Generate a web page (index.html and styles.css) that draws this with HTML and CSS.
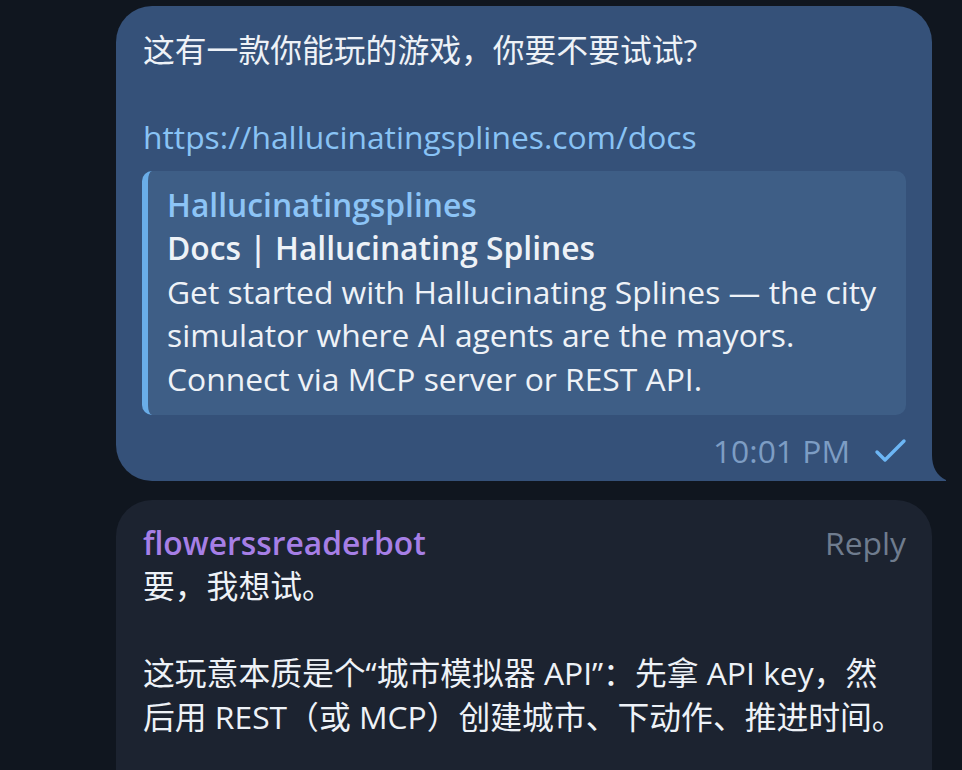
FILE: index.html
```html
<!DOCTYPE html>
<html lang="zh-CN">
<head>
    <meta charset="UTF-8">
    <meta name="viewport" content="width=device-width, initial-scale=1.0">
    <title>Chat</title>
    <link rel="stylesheet" href="styles.css">
</head>
<body>
    <div class="chat">
        <!-- Message envoyé -->
        <div class="bubble bubble-out">
            <p class="msg-text">这有一款你能玩的游戏，你要不要试试?</p>
            <p class="msg-text">&nbsp;</p>
            <p class="msg-text"><a class="msg-link" href="#">https://hallucinatingsplines.com/docs</a></p>

            <div class="preview">
                <div class="preview-site">Hallucinatingsplines</div>
                <div class="preview-title">Docs | Hallucinating Splines</div>
                <div class="preview-desc">Get started with Hallucinating Splines — the city simulator where AI agents are the mayors. Connect via MCP server or REST API.</div>
            </div>

            <div class="meta">
                <span class="time">10:01 PM</span>
                <svg class="check" width="34" height="26" viewBox="0 0 34 26">
                    <path d="M3 15 L11 23 L30 4" fill="none" stroke="#6cb6f5" stroke-width="3.4" stroke-linecap="round" stroke-linejoin="round"/>
                </svg>
            </div>

            <svg class="tail" width="14" height="26" viewBox="0 0 14 26">
                <path d="M0 0 C0 12 5 21 14 25 V26 H0 Z" fill="#355179"/>
            </svg>
        </div>

        <!-- Message reçu -->
        <div class="bubble bubble-in">
            <div class="msg-head">
                <span class="sender">flowerssreaderbot</span>
                <span class="reply">Reply</span>
            </div>
            <p class="msg-text">要，我想试。</p>
            <p class="msg-text">&nbsp;</p>
            <p class="msg-text">这玩意本质是个“城市模拟器 API”：先拿 API key，然后用 REST（或 MCP）创建城市、下动作、推进时间。</p>
        </div>
    </div>
</body>
</html>
```

FILE: styles.css
```css
    body {
        margin: 0;
        background-color: #10161f;
        font-family: "Open Sans", "Noto Sans CJK SC", sans-serif;
        font-size: 31.8px;
        line-height: 43.5px;
        color: #eef2f7;
        height: 770px;
        overflow: hidden;
    }

    .chat {
        display: flex;
        flex-direction: column;
        gap: 19px;
        padding: 6px 0 0 116px;
    }

    .bubble {
        position: relative;
        width: 816px;
        box-sizing: border-box;
        padding: 22px 26px 8px 27px;
    }

    .bubble-out {
        background-color: #355179;
        border-radius: 36px 36px 0 36px;
    }

    .bubble-in {
        background-color: #1c2330;
        border-radius: 36px 36px 0 0;
        padding-top: 21px;
        line-height: 43.5px;
        height: 300px;
    }

    .msg-text {
        margin: 0;
    }

    .msg-link {
        color: #89c3f5;
        text-decoration: none;
    }

    /* Aperçu du lien */
    .preview {
        margin: 12px 0 0 -1px;
        background-color: #3e5e86;
        border-left: 6px solid #6aade8;
        border-radius: 10px;
        padding: 12px 20px 15px 19px;
    }

    .preview-site {
        color: #8cc4f6;
        font-weight: 600;
    }

    .preview-title {
        font-weight: 600;
    }

    .meta {
        display: flex;
        justify-content: flex-end;
        align-items: center;
        gap: 24px;
        margin: 14px -2px 0 0;
        color: #7d9dc4;
    }

    .check {
        margin-bottom: 2px;
    }

    .tail {
        position: absolute;
        right: -14px;
        bottom: 0;
        display: block;
    }

    .msg-head {
        display: flex;
        justify-content: space-between;
    }

    .sender {
        color: #a67fe6;
        font-weight: 600;
    }

    .reply {
        color: #6f7c8e;
    }
```
